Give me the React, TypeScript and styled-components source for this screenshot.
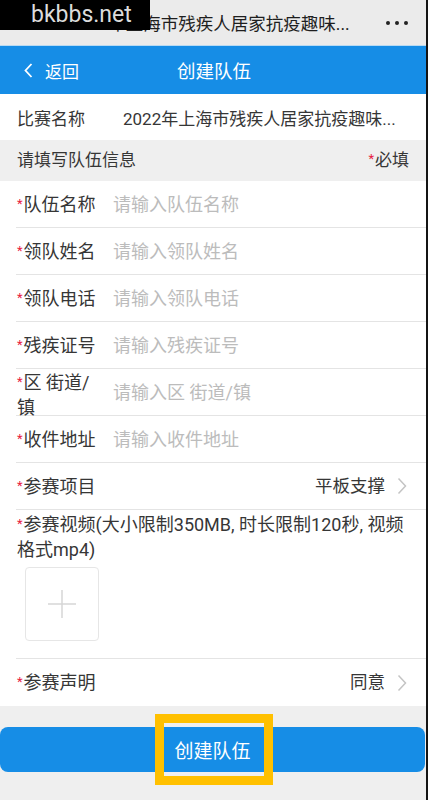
import styled, { createGlobalStyle } from "styled-components";

const GlobalStyle = createGlobalStyle`
    body {
        margin: 0;
        background: #141414;
        font-family: Roboto, "Noto Sans CJK SC", sans-serif;
    }
    * { box-sizing: border-box; }
`

const Page = styled.div`
    width: 426px;
    min-height: 800px;
    background: #efefef;
    color: #363636;
`

// 위챗 상단 타이틀 바
const TopBar = styled.header`
    position: relative;
    height: 45px;
    background: #ebebeb;
    display: flex;
    align-items: center;
    padding: 0 18px 0 69px;
`

const TopTitle = styled.span`
    flex: 1;
    font-size: 17.5px;
    color: #1e1e1e;
    white-space: nowrap;
    overflow: hidden;
`

const Dots = styled.div`
    display: flex;
    gap: 5px;
    margin-left: 16px;
    span {
        width: 4px;
        height: 4px;
        border-radius: 50%;
        background: #222;
    }
`

const Watermark = styled.div`
    position: absolute;
    left: 0;
    top: 0;
    width: 150px;
    height: 30px;
    background: #000;
    color: #dcdcdc;
    font-family: Roboto, "Liberation Sans", sans-serif;
    font-size: 23px;
    line-height: 30px;
    padding-left: 31px;
`

const NavBar = styled.nav`
    position: relative;
    height: 49px;
    background: #168de6;
    border-top: 1px solid #b9daf2;
    display: flex;
    align-items: center;
    justify-content: center;
    color: #fff;
`

const Back = styled.div`
    position: absolute;
    left: 24px;
    top: 0;
    bottom: 0;
    display: flex;
    align-items: center;
    gap: 12px;
    font-size: 17px;
`

const NavTitle = styled.h1`
    margin: 0;
    font-size: 18.5px;
    font-weight: 400;
    margin-left: 2px;
`

const InfoRow = styled.div`
    height: 46px;
    background: #fff;
    display: flex;
    align-items: center;
    padding: 0 18px 0 17px;
    font-size: 17px;
`

const InfoLabel = styled.span`
    width: 106px;
    flex-shrink: 0;
`

const InfoValue = styled.span`
    white-space: nowrap;
    overflow: hidden;
`

const SectionHead = styled.div`
    height: 41px;
    display: flex;
    align-items: center;
    justify-content: space-between;
    padding: 0 17px 1px;
    font-size: 17px;
    line-height: 24px;
`

const Star = styled.i`
    font-style: normal;
    color: #e8213f;
    font-size: 13px;
    line-height: 1;
    vertical-align: 3px;
    margin-right: 1px;
`

const Form = styled.section`
    background: #fff;
    padding-left: 16px;
`

const Field = styled.div<{ $block?: boolean }>`
    display: flex;
    flex-direction: ${p => (p.$block ? "column" : "row")};
    align-items: ${p => (p.$block ? "flex-start" : "center")};
    min-height: 47px;
    padding: ${p => (p.$block ? "2px 15px 17px 1px" : "0 19px 0 1px")};
    border-bottom: 1px solid #e4e4e4;
    font-size: 18px;
    line-height: 25px;
    &:last-child { border-bottom: none; }
`

const Label = styled.span<{ $wrap?: boolean }>`
    width: 86px;
    flex-shrink: 0;
    margin: ${p => (p.$wrap ? "1px 10px -5px 0" : "0 10px 0 0")};
`

const Input = styled.span`
    flex: 1;
    color: #bcbcbc;
`

const Value = styled.span`
    margin-left: auto;
    margin-right: 12px;
    font-size: 17.5px;
`

const Upload = styled.div`
    width: 74px;
    height: 74px;
    margin: 5px 0 0 8px;
    border: 1px solid #e6e6e6;
    border-radius: 4px;
    display: flex;
    align-items: center;
    justify-content: center;
`

const Actions = styled.div`
    padding: 21px 1px 0 0;
`

const SubmitButton = styled.button`
    position: relative;
    width: 100%;
    height: 45px;
    border: none;
    border-radius: 8px;
    background: #168de6;
    color: #fff;
    font-family: inherit;
    font-size: 19px;
`

// 스크린샷 위 노란 강조 박스
const Highlight = styled.span`
    position: absolute;
    left: 155px;
    top: -13px;
    width: 118px;
    height: 71px;
    border: 9px solid #ffc000;
`

const Chevron = () => (
    <svg width="10" height="18" viewBox="0 0 10 18">
        <path d="M1.5 1.5 L8.5 9 L1.5 16.5" fill="none" stroke="#c4c4c4" strokeWidth="1.5" />
    </svg>
)

const fields = [
    { label: "队伍名称", hint: "请输入队伍名称" },
    { label: "领队姓名", hint: "请输入领队姓名" },
    { label: "领队电话", hint: "请输入领队电话" },
    { label: "残疾证号", hint: "请输入残疾证号" },
    { label: "区 街道/镇", hint: "请输入区 街道/镇", wrap: true },
    { label: "收件地址", hint: "请输入收件地址" },
]

function App() {
    return (
        <Page>
            <GlobalStyle />
            <TopBar>
                <TopTitle>2022年上海市残疾人居家抗疫趣味...</TopTitle>
                <Dots><span /><span /><span /></Dots>
                <Watermark>bkbbs.net</Watermark>
            </TopBar>
            <NavBar>
                <Back>
                    <svg width="9" height="15" viewBox="0 0 9 15">
                        <path d="M7.5 1 L1.5 7.5 L7.5 14" fill="none" stroke="#fff" strokeWidth="1.8" />
                    </svg>
                    返回
                </Back>
                <NavTitle>创建队伍</NavTitle>
            </NavBar>
            <InfoRow>
                <InfoLabel>比赛名称</InfoLabel>
                <InfoValue>2022年上海市残疾人居家抗疫趣味...</InfoValue>
            </InfoRow>
            <SectionHead>
                <span>请填写队伍信息</span>
                <span><Star>*</Star>必填</span>
            </SectionHead>
            <Form>
                {fields.map(f => (
                    <Field key={f.label}>
                        <Label $wrap={f.wrap}><Star>*</Star>{f.label}</Label>
                        <Input>{f.hint}</Input>
                    </Field>
                ))}
                <Field>
                    <Label><Star>*</Star>参赛项目</Label>
                    <Value>平板支撑</Value>
                    <Chevron />
                </Field>
                <Field $block>
                    <div><Star>*</Star>参赛视频(大小限制350MB, 时长限制120秒, 视频格式mp4)</div>
                    <Upload>
                        <svg width="30" height="30" viewBox="0 0 30 30">
                            <path d="M15 1 V29 M1 15 H29" stroke="#d6d6d6" strokeWidth="1.5" />
                        </svg>
                    </Upload>
                </Field>
                <Field>
                    <Label><Star>*</Star>参赛声明</Label>
                    <Value>同意</Value>
                    <Chevron />
                </Field>
            </Form>
            <Actions>
                <SubmitButton>
                    创建队伍
                    <Highlight />
                </SubmitButton>
            </Actions>
        </Page>
    )
}

export default App;
